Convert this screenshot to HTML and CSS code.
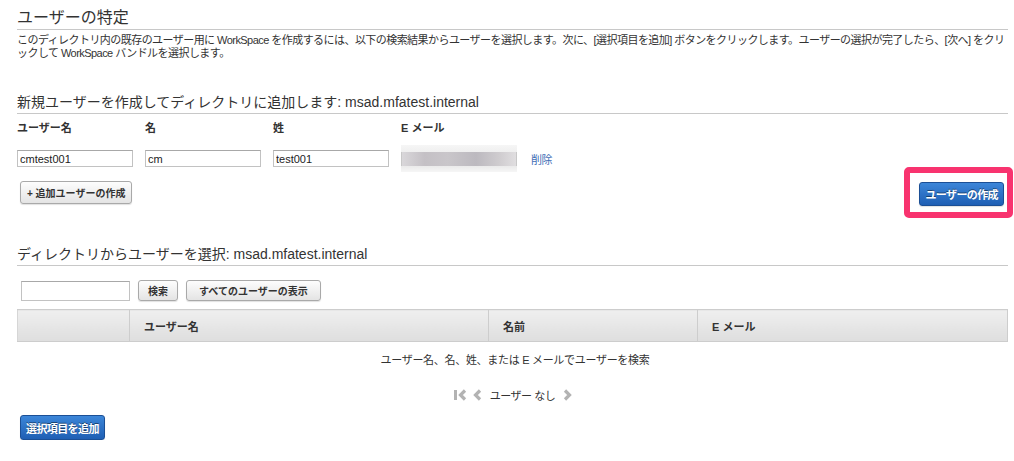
FILE: index.html
```html
<!DOCTYPE html>
<html lang="ja">
<head>
    <meta charset="UTF-8">
    <title>ユーザーの特定</title>
    <link rel="stylesheet" href="styles.css">
</head>
<body>
    <div class="container">
        <h1>ユーザーの特定</h1>
        <p class="intro">このディレクトリ内の既存のユーザー用に WorkSpace を作成するには、以下の検索結果からユーザーを選択します。次に、[選択項目を追加] ボタンをクリックします。ユーザーの選択が完了したら、[次へ] をクリックして WorkSpace バンドルを選択します。</p>

        <!-- 新規ユーザー -->
        <h2>新規ユーザーを作成してディレクトリに追加します: msad.mfatest.internal</h2>
        <div class="user-grid labels">
            <span>ユーザー名</span>
            <span>名</span>
            <span>姓</span>
            <span>E メール</span>
        </div>
        <div class="user-grid fields">
            <input type="text" value="cmtest001">
            <input type="text" value="cm">
            <input type="text" value="test001">
            <div class="blurred"><div class="blurred-inner"></div></div>
            <a href="#" class="remove">削除</a>
        </div>
        <div class="actions">
            <button class="btn">+ 追加ユーザーの作成</button>
            <div class="highlight">
                <button class="btn btn-primary">ユーザーの作成</button>
            </div>
        </div>

        <!-- ディレクトリから選択 -->
        <h2 class="second">ディレクトリからユーザーを選択: msad.mfatest.internal</h2>
        <div class="search">
            <input type="text" class="search-input">
            <button class="btn btn-search">検索</button>
            <button class="btn btn-all">すべてのユーザーの表示</button>
        </div>

        <table class="users">
            <thead>
                <tr>
                    <th class="col-check"></th>
                    <th class="col-user">ユーザー名</th>
                    <th class="col-name">名前</th>
                    <th>E メール</th>
                </tr>
            </thead>
            <tbody>
                <tr>
                    <td colspan="4" class="empty">ユーザー名、名、姓、または E メールでユーザーを検索</td>
                </tr>
            </tbody>
        </table>

        <div class="pager">
            <svg width="14" height="12" viewBox="0 0 14 12"><rect x="1" y="1" width="3" height="10" fill="#b3b3b3"/><path d="M12 1.5 L7.5 6 L12 10.5" fill="none" stroke="#b3b3b3" stroke-width="3.2"/></svg>
            <svg width="9" height="12" viewBox="0 0 9 12"><path d="M7 1.5 L2.5 6 L7 10.5" fill="none" stroke="#b3b3b3" stroke-width="3.2"/></svg>
            <span>ユーザー なし</span>
            <svg width="9" height="12" viewBox="0 0 9 12"><path d="M2 1.5 L6.5 6 L2 10.5" fill="none" stroke="#b3b3b3" stroke-width="3.2"/></svg>
        </div>

        <button class="btn btn-primary add-selected">選択項目を追加</button>
    </div>
</body>
</html>
```

FILE: styles.css
```css
body {
    font-family: "Liberation Sans", "Noto Sans CJK JP", sans-serif;
    color: #333;
    background-color: #fff;
    margin: 0;
    padding: 0;
}

.container {
    padding: 0 6px 0 17px;
}

h1 {
    font-size: 16px;
    font-weight: normal;
    line-height: 21px;
    margin: 0;
    padding: 7px 0 1px;
    border-bottom: 1px solid #c8c8c8;
}

.intro {
    font-size: 11px;
    line-height: 13px;
    letter-spacing: -0.55px;
    margin: 4px 0 0;
}

h2 {
    font-size: 14px;
    font-weight: normal;
    line-height: 18px;
    margin: 33px 0 0;
    padding-bottom: 2px;
    border-bottom: 1px solid #c8c8c8;
}

h2.second {
    margin-top: 27px;
}

.user-grid {
    display: grid;
    grid-template-columns: 116px 116px 116px 116px auto;
    column-gap: 12px;
    font-size: 11px;
}

.labels {
    margin-top: 7px;
    line-height: 14px;
    font-weight: bold;
}

.fields {
    margin-top: 10px;
    align-items: center;
}

input[type="text"] {
    box-sizing: border-box;
    height: 17px;
    padding: 0 2px;
    border: 1px solid #c2c2c2;
    border-top-color: #a8a8a8;
    font-family: inherit;
    font-size: 11px;
    color: #222;
}

.blurred {
    height: 27px;
    background: linear-gradient(to bottom, #f6f6f6, #eeeeee 30%, #e6e6e6 70%, #f6f6f6);
    display: flex;
    align-items: center;
}

.blurred-inner {
    height: 14px;
    width: 100%;
    border-left: 1px solid #c8c8c8;
    border-right: 1px solid #c8c8c8;
    background: linear-gradient(to right, #d9d7da, #c4c0c5 20%, #c9c6ca 40%, #bcb9bf 65%, #cfcccf 85%, #e0dee0);
}

.remove {
    color: #3e6db5;
    text-decoration: none;
    margin-left: 2px;
    letter-spacing: -0.5px;
}

.actions {
    display: flex;
    justify-content: space-between;
    align-items: center;
    margin-top: -5px;
    margin-right: -5px;
}

.actions > .btn {
    margin-left: 3px;
}

.highlight {
    border: 6px solid #f8336f;
    border-radius: 5px;
    padding: 9px 3px 6px 9px;
}

.btn {
    font-family: inherit;
    font-size: 10px;
    font-weight: bold;
    color: #333;
    height: 23px;
    padding: 0 6px;
    border: 1px solid #a9a9a9;
    border-radius: 3px;
    background: linear-gradient(to bottom, #fdfdfd, #e4e4e4);
    box-shadow: 0 1px 1px rgba(0, 0, 0, 0.12);
    cursor: pointer;
}

.btn-primary {
    color: #fff;
    height: 24px;
    font-size: 11px;
    letter-spacing: -0.6px;
    padding: 0 5px;
    border-color: #1b4f95;
    background: linear-gradient(to bottom, #3c86d8, #1f5fb4);
    text-shadow: 0 -1px 0 rgba(0, 0, 0, 0.45);
}

.search {
    display: flex;
    align-items: center;
    gap: 8px;
    margin-top: 14px;
    padding-left: 4px;
}

.search-input {
    width: 109px;
    height: 20px !important;
}

.search .btn {
    height: 21px;
}

.btn-search {
    padding: 0 9px;
}

.btn-all {
    padding: 0 12px;
}

.users {
    width: 100%;
    border-collapse: collapse;
    margin-top: 8px;
    font-size: 11px;
}

.users th {
    height: 31px;
    text-align: left;
    padding: 0 14px;
    border: 1px solid #cdcdcd;
    border-left-color: #d6d6d6;
    background: linear-gradient(to bottom, #efefef, #dedede);
}

.col-check {
    width: 111px;
    padding: 0 !important;
}

.col-user {
    width: 330px;
}

.col-name {
    width: 180px;
}

.empty {
    text-align: center;
    height: 31px;
    padding-left: 6px;
    letter-spacing: -0.3px;
}

.pager {
    display: flex;
    justify-content: center;
    align-items: center;
    gap: 6px;
    margin-top: 13px;
    font-size: 11px;
    height: 14px;
    letter-spacing: -0.5px;
}

.pager span {
    margin: 0 2px;
}

.add-selected {
    margin-top: 13px;
    margin-left: 3px;
    height: 25px;
}
```
